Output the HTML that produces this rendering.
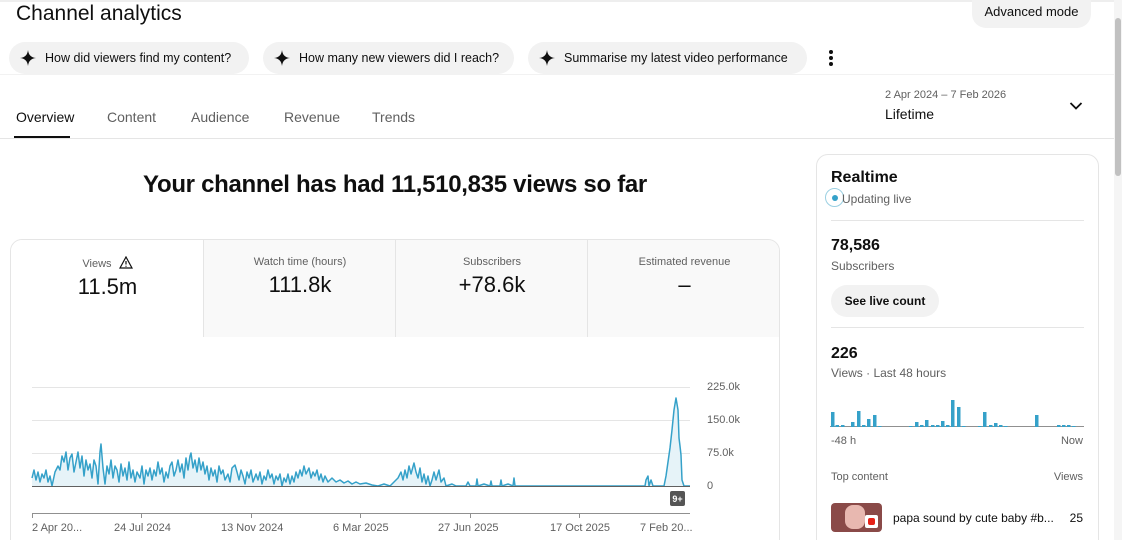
<!DOCTYPE html>
<html style="height:540px;overflow:hidden"><head><meta charset="utf-8"><style>
*{box-sizing:border-box;margin:0;padding:0}
body{width:1122px;height:540px;overflow:hidden;background:#fff;font-family:"Liberation Sans",Roboto,sans-serif;color:#0f0f0f;position:relative}
.a{position:absolute}
.chip{position:absolute;top:42px;height:32px;background:#f2f2f2;border-radius:16px;font-size:12.5px;line-height:32px;padding-left:36px;color:#0f0f0f}
.chip svg{position:absolute;left:11px;top:8px}
.tab{position:absolute;top:109px;font-size:14px;color:#606060}
.card{position:absolute;left:10px;top:239px;width:770px;height:360px;border:1px solid #e5e5e5;border-radius:12px;overflow:hidden}
.m{position:absolute;top:0;height:97px;width:193px;background:#f9f9f9;border-left:1px solid #e5e5e5;text-align:center}
.m .l{font-size:11px;color:#606060;margin-top:16px}
.m .v{font-size:22px;margin-top:4px;color:#0f0f0f}
.g{font-size:11px;color:#606060;position:absolute}
.rt{position:absolute;left:816px;top:154px;width:283px;height:440px;border:1px solid #e5e5e5;border-radius:12px}
.hr{position:absolute;left:14px;width:253px;height:1px;background:#e5e5e5}
</style></head><body>
<div class="a" style="left:0;top:0;width:1114px;height:2px;background:#eee"></div>
<div class="a" style="left:16px;top:2px;font-size:21px;">Channel analytics</div>
<div class="a" style="left:972px;top:0;width:119px;height:28px;background:#f2f2f2;border-radius:0 0 14px 14px;font-size:13px;line-height:24px;text-align:center">Advanced mode</div>

<div class="chip" style="left:9px;width:240px"><svg width="16" height="16" viewBox="0 0 16 16"><path d="M8 0C8.6 5 11 7.4 16 8 11 8.6 8.6 11 8 16 7.4 11 5 8.6 0 8 5 7.4 7.4 5 8 0Z" fill="#0f0f0f"/></svg>How did viewers find my content?</div>
<div class="chip" style="left:263px;width:251px"><svg width="16" height="16" viewBox="0 0 16 16"><path d="M8 0C8.6 5 11 7.4 16 8 11 8.6 8.6 11 8 16 7.4 11 5 8.6 0 8 5 7.4 7.4 5 8 0Z" fill="#0f0f0f"/></svg>How many new viewers did I reach?</div>
<div class="chip" style="left:528px;width:279px"><svg width="16" height="16" viewBox="0 0 16 16"><path d="M8 0C8.6 5 11 7.4 16 8 11 8.6 8.6 11 8 16 7.4 11 5 8.6 0 8 5 7.4 7.4 5 8 0Z" fill="#0f0f0f"/></svg>Summarise my latest video performance</div>
<svg class="a" style="left:826px;top:49px" width="10" height="18"><circle cx="5" cy="3" r="2" fill="#0f0f0f"/><circle cx="5" cy="9" r="2" fill="#0f0f0f"/><circle cx="5" cy="15" r="2" fill="#0f0f0f"/></svg>
<div class="a" style="left:0;top:74px;width:1114px;height:1px;background:#f2f2f2"></div>

<div class="tab" style="left:16px;color:#0f0f0f">Overview</div>
<div class="tab" style="left:107px">Content</div>
<div class="tab" style="left:191px">Audience</div>
<div class="tab" style="left:284px">Revenue</div>
<div class="tab" style="left:372px">Trends</div>
<div class="a" style="left:14px;top:136px;width:56px;height:3px;background:#0f0f0f"></div>
<div class="a" style="left:0;top:138px;width:1114px;height:1px;background:#e5e5e5"></div>
<div class="a" style="left:885px;top:89px;font-size:11px;color:#606060">2 Apr 2024 – 7 Feb 2026</div>
<div class="a" style="left:885px;top:106px;font-size:14px">Lifetime</div>
<svg class="a" style="left:1069px;top:101px" width="14" height="10"><path d="M1.5 2l5.5 5.5 5.5-5.5" stroke="#0f0f0f" stroke-width="1.8" fill="none"/></svg>

<div class="a" style="left:0;top:171px;width:790px;text-align:center;font-size:24px;font-weight:bold;letter-spacing:-0.3px">Your channel has had 11,510,835 views so far</div>

<div class="card">
 <div class="m" style="left:0;background:#fff;border-left:none"><div class="l">Views <svg width="14" height="13" viewBox="0 0 14 13" style="vertical-align:-2px;margin-left:4px"><path d="M7 1L13 12H1Z" fill="none" stroke="#0f0f0f" stroke-width="1.2"/><path d="M7 5v3.5M7 9.8v1" stroke="#0f0f0f" stroke-width="1.2"/></svg></div><div class="v">11.5m</div></div>
 <div class="m" style="left:192px"><div class="l">Watch time (hours)</div><div class="v">111.8k</div></div>
 <div class="m" style="left:384px"><div class="l">Subscribers</div><div class="v">+78.6k</div></div>
 <div class="m" style="left:576px;width:194px"><div class="l">Estimated revenue</div><div class="v">–</div></div>
</div>

<svg class="a" style="left:0;top:370px" width="790" height="170">
 <g stroke="#e5e5e5" stroke-width="1"><line x1="32" y1="17.5" x2="690" y2="17.5"/><line x1="32" y1="50.5" x2="690" y2="50.5"/><line x1="32" y1="83.5" x2="690" y2="83.5"/></g>
 <g transform="translate(0,-370)">
 <path fill="#e6f3f8" stroke="none" d="M32 486 L32 478 34 470 36 480 38 472 40 482 42 474 44 478 46 470 48 482 50 476 52 486 55 472 58 466 60 470 62 456 64 462 66 452 68 470 70 458 72 454 74 472 76 462 78 452 80 468 82 456 84 476 86 460 88 470 90 464 92 478 94 460 96 466 98 484 100 452 101 444 103 468 105 484 107 466 109 474 111 460 113 478 115 466 117 470 119 482 121 464 123 476 125 468 127 480 129 462 131 478 133 470 135 482 137 472 140 478 142 466 144 484 146 470 148 476 150 468 152 480 154 470 156 476 158 462 160 474 162 468 164 482 166 472 168 478 170 466 172 462 174 476 176 470 178 460 180 472 182 464 184 478 186 458 188 470 190 456 191 453 193 468 195 460 197 472 199 458 201 470 203 462 205 474 207 466 209 480 211 468 213 476 215 470 217 482 219 466 221 474 223 470 225 480 228 474 230 482 232 468 235 465 237 472 239 480 241 470 243 476 245 484 247 472 249 478 251 470 253 482 256 474 258 480 260 472 262 484 264 476 266 480 268 470 270 478 272 474 274 484 276 476 278 480 280 474 282 486 284 478 286 482 288 474 290 484 292 476 294 482 296 472 298 478 300 470 302 476 304 466 306 474 309 468 311 478 313 472 315 476 317 470 319 480 321 474 323 482 325 476 328 482 332 478 336 482 340 480 344 483 348 481 352 484 356 482 360 484 366 483 372 485 378 486 384 484 390 486 394 482 398 478 401 472 403 480 405 470 407 478 409 466 411 474 414 463 416 472 418 478 420 468 422 482 424 474 426 484 428 476 430 486 432 480 434 472 436 480 439 470 441 482 444 478 446 486 452 484 456 486 466 486 468 482 470 486 476 486 477 479 478 486 484 484 490 486 491 481 492 486 500 486 501 480 502 486 508 484 513 486 514 478 515 486 645 486 646 480 648 476 649 486 651 480 653 486 664 486 666 476 668 462 670 448 672 430 674 410 676 398 678 410 679 438 680 446 681 455 682 480 684 486 690 486Z"/>
 <path fill="none" stroke="#35a1c9" stroke-width="1.5" stroke-linejoin="round" d="M32 478 34 470 36 480 38 472 40 482 42 474 44 478 46 470 48 482 50 476 52 486 55 472 58 466 60 470 62 456 64 462 66 452 68 470 70 458 72 454 74 472 76 462 78 452 80 468 82 456 84 476 86 460 88 470 90 464 92 478 94 460 96 466 98 484 100 452 101 444 103 468 105 484 107 466 109 474 111 460 113 478 115 466 117 470 119 482 121 464 123 476 125 468 127 480 129 462 131 478 133 470 135 482 137 472 140 478 142 466 144 484 146 470 148 476 150 468 152 480 154 470 156 476 158 462 160 474 162 468 164 482 166 472 168 478 170 466 172 462 174 476 176 470 178 460 180 472 182 464 184 478 186 458 188 470 190 456 191 453 193 468 195 460 197 472 199 458 201 470 203 462 205 474 207 466 209 480 211 468 213 476 215 470 217 482 219 466 221 474 223 470 225 480 228 474 230 482 232 468 235 465 237 472 239 480 241 470 243 476 245 484 247 472 249 478 251 470 253 482 256 474 258 480 260 472 262 484 264 476 266 480 268 470 270 478 272 474 274 484 276 476 278 480 280 474 282 486 284 478 286 482 288 474 290 484 292 476 294 482 296 472 298 478 300 470 302 476 304 466 306 474 309 468 311 478 313 472 315 476 317 470 319 480 321 474 323 482 325 476 328 482 332 478 336 482 340 480 344 483 348 481 352 484 356 482 360 484 366 483 372 485 378 486 384 484 390 486 394 482 398 478 401 472 403 480 405 470 407 478 409 466 411 474 414 463 416 472 418 478 420 468 422 482 424 474 426 484 428 476 430 486 432 480 434 472 436 480 439 470 441 482 444 478 446 486 452 484 456 486 466 486 468 482 470 486 476 486 477 479 478 486 484 484 490 486 491 481 492 486 500 486 501 480 502 486 508 484 513 486 514 478 515 486 645 486 646 480 648 476 649 486 651 480 653 486 664 486 666 476 668 462 670 448 672 430 674 410 676 398 678 410 679 438 680 446 681 455 682 480 684 486 690 486"/>
 </g>
 <line x1="32" y1="116.5" x2="690" y2="116.5" stroke="#606060" stroke-width="1"/>
 <line x1="32" y1="143.5" x2="690" y2="143.5" stroke="#909090" stroke-width="1"/>
 <g stroke="#909090"><line x1="32.5" y1="143" x2="32.5" y2="148"/><line x1="141.5" y1="143" x2="141.5" y2="148"/><line x1="251.5" y1="143" x2="251.5" y2="148"/><line x1="360.5" y1="143" x2="360.5" y2="148"/><line x1="470.5" y1="143" x2="470.5" y2="148"/><line x1="579.5" y1="143" x2="579.5" y2="148"/></g>
 <rect x="670" y="121" width="15" height="15" rx="2" fill="#555"/>
 <text x="677.5" y="132" font-size="9" fill="#fff" text-anchor="middle" font-weight="bold" font-family="Liberation Sans">9+</text>
</svg>
<div class="g" style="left:707px;top:381px">225.0k</div>
<div class="g" style="left:707px;top:414px">150.0k</div>
<div class="g" style="left:707px;top:447px">75.0k</div>
<div class="g" style="left:707px;top:480px">0</div>
<div class="g" style="left:32px;top:522px">2 Apr 20...</div>
<div class="g" style="left:114px;top:522px">24 Jul 2024</div>
<div class="g" style="left:221px;top:522px">13 Nov 2024</div>
<div class="g" style="left:333px;top:522px">6 Mar 2025</div>
<div class="g" style="left:438px;top:522px">27 Jun 2025</div>
<div class="g" style="left:550px;top:522px">17 Oct 2025</div>
<div class="g" style="left:640px;top:522px">7 Feb 20...</div>

<div class="rt">
 <div class="a" style="left:14px;top:14px;font-size:16px;font-weight:bold">Realtime</div>
 <div class="a" style="left:8px;top:33px;width:19px;height:19px;border:1px solid #9bd0e2;border-radius:50%"></div>
 <div class="a" style="left:15px;top:40px;width:6px;height:6px;background:#35a1c9;border-radius:50%"></div>
 <div class="a" style="left:25px;top:37px;font-size:12px;color:#606060">Updating live</div>
 <div class="hr" style="top:65px"></div>
 <div class="a" style="left:14px;top:82px;font-size:16px;font-weight:bold">78,586</div>
 <div class="a" style="left:14px;top:104px;font-size:12px;color:#606060">Subscribers</div>
 <div class="a" style="left:14px;top:130px;width:108px;height:32px;background:#f2f2f2;border-radius:16px;font-size:12px;font-weight:bold;line-height:32px;text-align:center">See live count</div>
 <div class="hr" style="top:172px"></div>
 <div class="a" style="left:14px;top:190px;font-size:16px;font-weight:bold">226</div>
 <div class="a" style="left:14px;top:211px;font-size:12px;color:#606060">Views · Last 48 hours</div>
 <div class="a" style="left:14px;top:280px;font-size:11px;color:#606060">-48 h</div>
 <div class="a" style="right:15px;top:280px;font-size:11px;color:#606060">Now</div>
 <div class="a" style="left:14px;top:316px;font-size:11px;color:#606060">Top content</div>
 <div class="a" style="right:15px;top:316px;font-size:11px;color:#606060">Views</div>
 <div class="a" style="left:14px;top:348px;width:51px;height:29px;background:#8a4a48;border-radius:4px;overflow:hidden"><div class="a" style="left:14px;top:2px;width:20px;height:24px;background:#e8b8b0;border-radius:8px"></div><div class="a" style="left:34px;top:12px;width:13px;height:13px;background:#fff;border-radius:2px"><div class="a" style="left:3px;top:3px;width:7px;height:7px;background:#e62117;border-radius:2px"></div></div></div>
 <div class="a" style="left:76px;top:356px;font-size:12px">papa sound by cute baby #b...</div>
 <div class="a" style="right:15px;top:356px;font-size:12px">25</div>
 <div class="a" style="left:14px;top:385px;width:51px;height:29px;background:#5a4a48;border-radius:4px"></div>
</div>
<svg class="a" style="left:828px;top:396px" width="260" height="32">
 <line x1="2" y1="30.5" x2="256" y2="30.5" stroke="#909090"/>
 <g fill="#35a1c9">
 <rect x="3" y="16" width="3.5" height="15"/><rect x="7.5" y="29" width="3.5" height="2"/><rect x="13" y="29" width="3.5" height="2"/><rect x="23" y="26" width="3.5" height="5"/><rect x="29" y="15" width="3.5" height="16"/><rect x="34" y="29" width="3.5" height="2"/><rect x="39" y="23" width="3.5" height="8"/><rect x="45" y="19" width="3.5" height="12"/><rect x="50" y="30" width="3.5" height="1"/>
 <rect x="81" y="30" width="3.5" height="1"/><rect x="87" y="26" width="3.5" height="5"/><rect x="92" y="29" width="3.5" height="2"/><rect x="97" y="24" width="3.5" height="7"/><rect x="103" y="29" width="3.5" height="2"/><rect x="108" y="29" width="3.5" height="2"/><rect x="113" y="25" width="3.5" height="6"/><rect x="118" y="29" width="3.5" height="2"/><rect x="123" y="4" width="3.5" height="27"/><rect x="129" y="11" width="3.5" height="20"/><rect x="134" y="30" width="3.5" height="1"/>
 <rect x="150" y="30" width="3.5" height="1"/><rect x="155" y="16" width="3.5" height="15"/><rect x="161" y="29" width="3.5" height="2"/><rect x="166" y="27" width="3.5" height="4"/><rect x="171" y="29" width="3.5" height="2"/><rect x="176" y="30" width="3.5" height="1"/>
 <rect x="207" y="19" width="3.5" height="12"/><rect x="229" y="29" width="3.5" height="2"/><rect x="234" y="29" width="3.5" height="2"/><rect x="239" y="29" width="3.5" height="2"/><rect x="244" y="30" width="3.5" height="1"/>
 </g>
</svg>
<div class="a" style="left:1114px;top:0;width:8px;height:540px;background:#f5f5f5"></div>
<div class="a" style="left:1115px;top:18px;width:6px;height:158px;background:#c1c1c1;border-radius:3px"></div>
</body></html>
